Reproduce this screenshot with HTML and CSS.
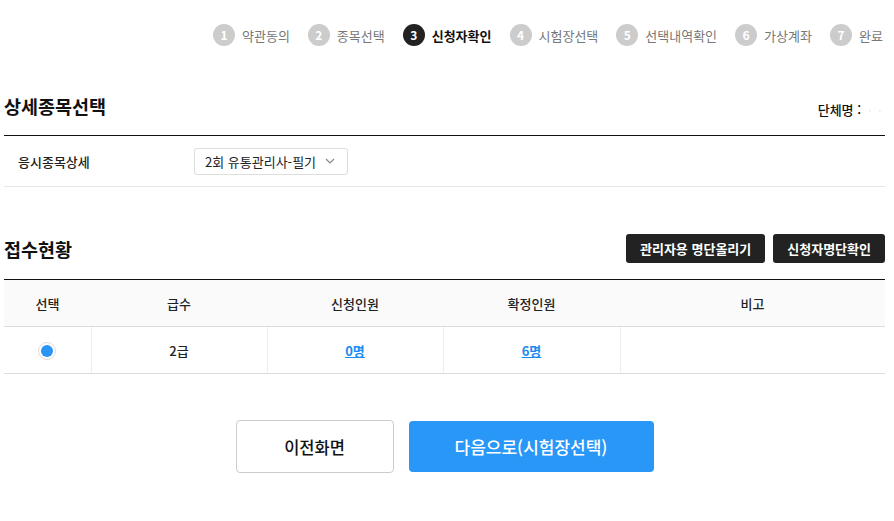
FILE: index.html
```html
<!DOCTYPE html>
<html lang="ko">
<head>
<meta charset="utf-8">
<title>상세종목선택</title>
<link rel="stylesheet" href="styles.css">
</head>
<body>
<div class="wrap">
  <ol class="steps">
    <li class="step"><span class="num">1</span><span class="label">약관동의</span></li>
    <li class="step"><span class="num">2</span><span class="label">종목선택</span></li>
    <li class="step active"><span class="num">3</span><span class="label">신청자확인</span></li>
    <li class="step"><span class="num">4</span><span class="label">시험장선택</span></li>
    <li class="step"><span class="num">5</span><span class="label">선택내역확인</span></li>
    <li class="step"><span class="num">6</span><span class="label">가상계좌</span></li>
    <li class="step"><span class="num">7</span><span class="label">완료</span></li>
  </ol>

  <div class="title-row first">
    <h2 class="title">상세종목선택</h2>
    <div class="org">단체명 : <span class="blur">ㆍㆍ</span></div>
  </div>
  <div class="form-row">
    <div class="form-label">응시종목상세</div>
    <div class="select">
      <span>2회 유통관리사-필기</span>
      <svg class="caret" width="10" height="6" viewBox="0 0 10 6"><path d="M1 1l4 4 4-4" fill="none" stroke="#888" stroke-width="1.2"/></svg>
    </div>
  </div>

  <div class="title-row second">
    <h2 class="title">접수현황</h2>
    <div class="btns">
      <button class="btn-dark">관리자용 명단올리기</button>
      <button class="btn-dark">신청자명단확인</button>
    </div>
  </div>
  <table class="tbl">
    <colgroup>
      <col class="c1"><col class="c2"><col class="c3"><col class="c4"><col class="c5">
    </colgroup>
    <thead>
      <tr><th>선택</th><th>급수</th><th>신청인원</th><th>확정인원</th><th>비고</th></tr>
    </thead>
    <tbody>
      <tr>
        <td><span class="radio"><span class="dot"></span></span></td>
        <td>2급</td>
        <td><a class="link" href="#">0명</a></td>
        <td><a class="link" href="#">6명</a></td>
        <td></td>
      </tr>
    </tbody>
  </table>

  <div class="actions">
    <button class="btn-prev">이전화면</button>
    <button class="btn-next">다음으로(시험장선택)</button>
  </div>
</div>
</body>
</html>
```
FILE: styles.css
```css
html, body {
  margin: 0;
  padding: 0;
  background: #fff;
  overflow: hidden;
}
body {
  font-family: "Noto Sans CJK KR", "Noto Sans", sans-serif;
  color: #222;
}
.wrap {
  margin-left: 4px;
  width: 881px;
}
.steps {
  list-style: none;
  margin: 0;
  padding: 24px 0 0 209px;
  display: flex;
  gap: 18px;
  white-space: nowrap;
  width: 1000px;
}
.step {
  display: flex;
  align-items: center;
  gap: 7px;
  height: 22px;
}
.num {
  width: 22px;
  height: 22px;
  border-radius: 50%;
  background: #cccccc;
  color: #fff;
  font-size: 12px;
  font-weight: 700;
  display: flex;
  align-items: center;
  justify-content: center;
  line-height: 1;
}
.label {
  font-size: 13px;
  color: #777;
}
.step.active .num {
  background: #222;
}
.step.active .label {
  color: #111;
  font-weight: 700;
}
.title-row {
  display: flex;
  justify-content: space-between;
}
.title-row.first {
  margin-top: 46px;
  align-items: flex-end;
  padding-bottom: 15px;
  border-bottom: 1px solid #111;
}
.title-row.second {
  margin-top: 47px;
  align-items: center;
  padding-bottom: 16px;
}
.title {
  margin: 0;
  font-size: 18.5px;
  line-height: 28px;
  font-weight: 700;
  color: #111;
}
.org {
  font-size: 13px;
  line-height: 20px;
  color: #111;
  font-weight: 500;
}
.blur {
  color: #e6e6e6;
  font-size: 11px;
}
.form-row {
  display: flex;
  align-items: center;
  height: 50px;
  border-bottom: 1px solid #e6e6e6;
}
.form-label {
  width: 176px;
  padding-left: 14px;
  font-size: 13px;
  font-weight: 500;
  color: #222;
}
.select {
  width: 130px;
  height: 25px;
  border: 1px solid #ddd;
  border-radius: 3px;
  display: flex;
  align-items: center;
  justify-content: space-between;
  padding: 0 12px 0 10px;
  font-size: 13px;
  color: #222;
}
.btns {
  display: flex;
  gap: 8px;
}
.btn-dark {
  height: 29px;
  border: 0;
  border-radius: 3px;
  background: #222;
  color: #fff;
  font-family: inherit;
  font-size: 13px;
  font-weight: 700;
  padding: 0 14px;
}
.tbl {
  width: 881px;
  border-collapse: collapse;
  table-layout: fixed;
  border-top: 1px solid #111;
  font-size: 13px;
}
.c1 { width: 87px; }
.c2 { width: 176px; }
.c3 { width: 176px; }
.c4 { width: 177px; }
.c5 { width: 265px; }
.tbl th {
  height: 46px;
  background: #fafafa;
  font-weight: 500;
  color: #222;
  border-bottom: 1px solid #ddd;
  padding: 0;
}
.tbl td {
  height: 46px;
  text-align: center;
  padding: 0;
  border-bottom: 1px solid #ddd;
  border-left: 1px solid #eee;
  font-weight: 500;
  color: #222;
}
.tbl td:first-child {
  border-left: 0;
}
.link {
  color: #1a8cf0;
  font-weight: 700;
  text-decoration: underline;
}
.radio {
  display: inline-flex;
  width: 16px;
  height: 16px;
  border: 1px solid #ddd;
  border-radius: 50%;
  align-items: center;
  justify-content: center;
  vertical-align: middle;
}
.dot {
  width: 12px;
  height: 12px;
  border-radius: 50%;
  background: #2b95f5;
}
.actions {
  margin-top: 46px;
  display: flex;
  justify-content: center;
  align-items: center;
  gap: 15px;
}
.btn-prev {
  width: 158px;
  height: 53px;
  background: #fff;
  border: 1px solid #ccc;
  border-radius: 4px;
  font-family: inherit;
  font-size: 16.5px;
  font-weight: 500;
  color: #111;
}
.btn-next {
  width: 245px;
  height: 51px;
  background: #2997f7;
  border: 0;
  border-radius: 4px;
  font-family: inherit;
  font-size: 17px;
  font-weight: 500;
  color: #fff;
}
```
